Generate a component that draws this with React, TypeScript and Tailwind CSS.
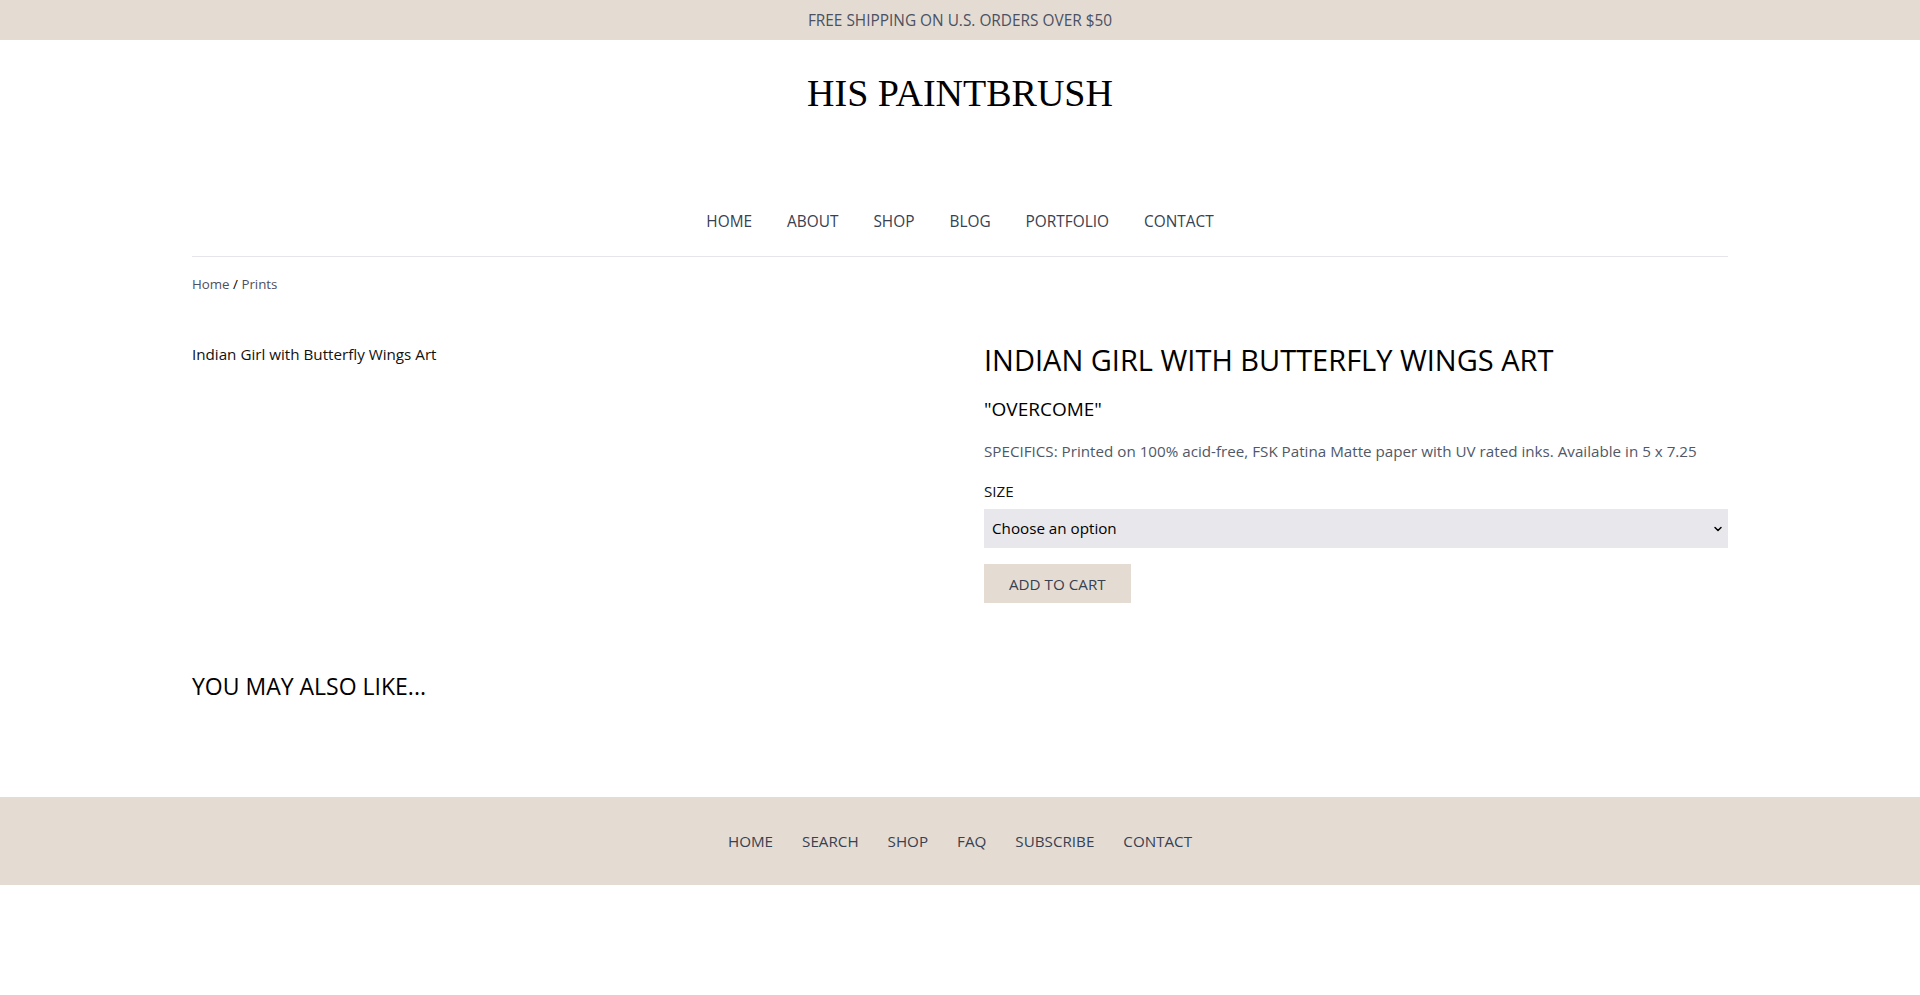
import { ChevronDown } from "lucide-react";

const sans = "font-['Open_Sans',sans-serif]";

const mainNav = ["HOME", "ABOUT", "SHOP", "BLOG", "PORTFOLIO", "CONTACT"];
const footerNav = ["HOME", "SEARCH", "SHOP", "FAQ", "SUBSCRIBE", "CONTACT"];

export default function App() {
  return (
    <div className={`min-h-[995px] bg-white ${sans}`}>
      {/* Announcement */}
      <div className="flex h-10 items-center justify-center bg-[#e4dcd3] pt-[2px] text-[15.4px] text-[#4b5162]">
        FREE SHIPPING ON U.S. ORDERS OVER $50
      </div>

      {/* Header */}
      <header className="mx-auto max-w-[1536px]">
        <div className="flex h-[106px] items-center justify-center">
          <a className="font-['Liberation_Serif',serif] text-[38px] leading-none text-black">
            HIS PAINTBRUSH
          </a>
        </div>

        <nav className="mt-[56px] flex justify-center gap-[35px] border-b border-[#e6e6ea] pb-[14px]">
          {mainNav.map((item) => (
            <a key={item} className="h-10 text-[15.4px] leading-10 text-[#374151]">
              {item}
            </a>
          ))}
        </nav>
      </header>

      <main className="mx-auto max-w-[1536px]">
        {/* Breadcrumb */}
        <div className="mt-[17px] text-[13.3px] leading-5 text-[#4b5162]">
          Home <span className="text-black">/</span> Prints
        </div>

        {/* Product */}
        <section className="mt-12 grid grid-cols-2 gap-12">
          <div className="text-[15.2px] leading-6 text-[#111]">
            Indian Girl with Butterfly Wings Art
          </div>

          <div>
            <h1 className="text-[29px] leading-9 text-black">
              INDIAN GIRL WITH BUTTERFLY WINGS ART
            </h1>
            <h2 className="mt-[17px] text-[19px] leading-7 text-black">"OVERCOME"</h2>
            <p className="mt-4 text-[15.2px] leading-6 text-[#505868]">
              SPECIFICS: Printed on 100% acid-free, FSK Patina Matte paper with UV rated inks. Available in 5 x 7.25
            </p>

            <label className="mt-4 block text-[15.2px] leading-6 text-[#111]">SIZE</label>
            <div className="relative mt-[6px]">
              <select className="h-[39px] w-full appearance-none bg-[#e8e7ec] pl-2 text-[15.2px] text-black outline-none">
                <option>Choose an option</option>
              </select>
              <ChevronDown
                size={12}
                strokeWidth={3}
                className="pointer-events-none absolute right-[4px] top-[14px] text-black"
              />
            </div>

            <button className="mt-4 h-[39px] bg-[#e4dcd3] px-[25px] pt-px text-[15.2px] text-[#374151]">
              ADD TO CART
            </button>
          </div>
        </section>

        {/* Related */}
        <h2 className="mt-[68px] text-[23px] leading-[30px] text-black">YOU MAY ALSO LIKE...</h2>
      </main>

      {/* Footer */}
      <footer className="mt-[96px] flex h-[88px] items-center justify-center gap-[29px] bg-[#e4dcd3] pt-px">
        {footerNav.map((item) => (
          <a key={item} className="text-[15.2px] text-[#374151]">
            {item}
          </a>
        ))}
      </footer>
    </div>
  );
}
